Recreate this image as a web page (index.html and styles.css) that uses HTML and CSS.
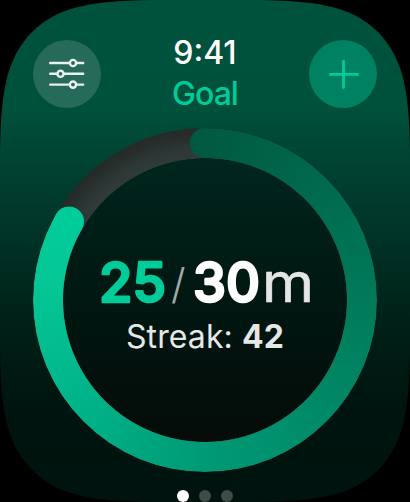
FILE: index.html
```
<!DOCTYPE html>
<html lang="en">
<head>
	<meta charset="utf-8">
	<title>Goal</title>
	<link rel="stylesheet" href="styles.css">
</head>
<body>
<div class="screen">
	<header class="header">
		<button class="btn" aria-label="Settings">
			<svg width="68" height="68" viewBox="0 0 68 68">
				<path d="M17.2 23H36.8M43.2 23H50.2M17.2 33.8H24.2M30.8 33.8H50.2M17.2 44.6H36.8M43.2 44.6H50.2"/>
				<circle cx="40" cy="23" r="3.1"/>
				<circle cx="27.5" cy="33.8" r="3.1"/>
				<circle cx="40" cy="44.6" r="3.1"/>
			</svg>
		</button>
		<div class="titles">
			<div class="time">9:41</div>
			<div class="title">Goal</div>
		</div>
		<button class="btn add" aria-label="Add">
			<svg width="68" height="68" viewBox="0 0 68 68">
				<path d="M21.4 34.4H48.6M34.5 21.4V47.6"/>
			</svg>
		</button>
	</header>

	<main class="dial">
		<div class="track"></div>
		<div class="progress"></div>
		<div class="cap start"></div>
		<div class="cap end"></div>
		<div class="info">
			<!-- round joins soften the digit corners -->
			<svg class="count" width="220" height="70" viewBox="0 0 220 70">
				<text class="done" x="4" y="55.5" textLength="67" lengthAdjust="spacingAndGlyphs">25</text>
				<text class="slash" x="76" y="53">/</text>
				<text class="goal" x="98" y="55.5" textLength="67" lengthAdjust="spacingAndGlyphs">30</text>
				<text class="unit" x="167" y="55.5" textLength="52" lengthAdjust="spacingAndGlyphs">m</text>
			</svg>
			<div class="streak">Streak: <b>42</b></div>
		</div>
	</main>

	<div class="pages">
		<i class="dot on"></i>
		<i class="dot"></i>
		<i class="dot"></i>
	</div>
</div>
</body>
</html>
```
FILE: styles.css
```
body {
	margin:0;
	background:#000;
	overflow:hidden;
	font-family:Inter, "Liberation Sans", sans-serif;
	}
.screen {
	box-sizing:border-box;
	width:410px;
	height:502px;
	padding:32px 33px 0;
	background:linear-gradient(#00523d 0, #00513b 105px, #004634 150px, #003427 230px, #002219 315px, #00150f 400px, #00130e 502px);
	clip-path:path("M0 165C0 95 5 60 32 32C60 5 95 0 165 0H245C315 0 350 5 378 32C405 60 410 95 410 165V337C410 407 405 442 378 470C350 497 315 502 245 502H165C95 502 60 497 32 470C5 442 0 407 0 337Z");
	}
.header {
	display:flex;
	justify-content:space-between;
	height:96px;
	}
.btn {
	width:68px;
	height:68px;
	margin:8px 0 0;
	padding:0;
	border:0;
	border-radius:50%;
	background:#266a59;
	}
.btn svg {
	display:block;
	fill:none;
	stroke:#e9f0ee;
	stroke-width:2.4;
	stroke-linecap:round;
	}
.add {
	background:#008161;
	}
.add svg {
	stroke:#00cc99;
	stroke-width:2.8;
	}
.titles {
	text-align:center;
	font-size:32px;
	font-weight:500;
	line-height:41px;
	color:#fff;
	}
.title {
	letter-spacing:-1px;
	color:#00cc99;
	}
.dial {
	display:grid;
	width:344px;
	height:344px;
	}
.dial > div {
	grid-area:1 / 1;
	}
.track {
	border-radius:50%;
	background:
		radial-gradient(circle closest-side, transparent 141.5px, #303b38 142px, #2d3735 153px, #262d2b 165px, #242a28 172px),
		linear-gradient(#00261d 30px, #001812 160px, #050b09 314px);
	}
.progress {
	border-radius:50%;
	background:conic-gradient(#005a41, #007a5a 90deg, #009a75 180deg, #00b489 232deg, #06c796 278deg, #00cc99 300deg, transparent 300deg);
	-webkit-mask:radial-gradient(circle, transparent 141.5px, #000 142.5px);
	mask:radial-gradient(circle, transparent 141.5px, #000 142.5px);
	}
/* cap rotates round the dial centre */
.cap {
	width:30px;
	height:30px;
	justify-self:center;
	transform-origin:15px 172px;
	}
.start {
	border-radius:50%;
	background:linear-gradient(90deg, #005a41 50%, transparent 50%);
	}
.end {
	border-radius:50%;
	background:#00cc99;
	transform:rotate(-60deg);
	}
.info {
	display:flex;
	flex-direction:column;
	align-items:center;
	padding-top:118px;
	}
.count {
	display:block;
	overflow:visible;
	font-size:55px;
	stroke-linejoin:round;
	}
.done, .goal {
	font-weight:500;
	fill:#fff;
	stroke:#fff;
	stroke-width:2.6;
	}
.done {
	fill:#00cc99;
	stroke:#00cc99;
	}
.slash {
	font-size:42px;
	font-weight:300;
	fill:#a3abaa;
	}
.unit {
	fill:#e5e5e5;
	stroke:#e5e5e5;
	stroke-width:.6;
	}
.streak {
	padding-top:1px;
	font-size:32px;
	line-height:40px;
	letter-spacing:.1px;
	color:#e5e8e7;
	}
.pages {
	display:flex;
	justify-content:center;
	gap:10px;
	padding-top:18px;
	}
.dot {
	width:12px;
	height:12px;
	border-radius:50%;
	background:#404b48;
	}
.dot.on {
	background:#fff;
	}
```
